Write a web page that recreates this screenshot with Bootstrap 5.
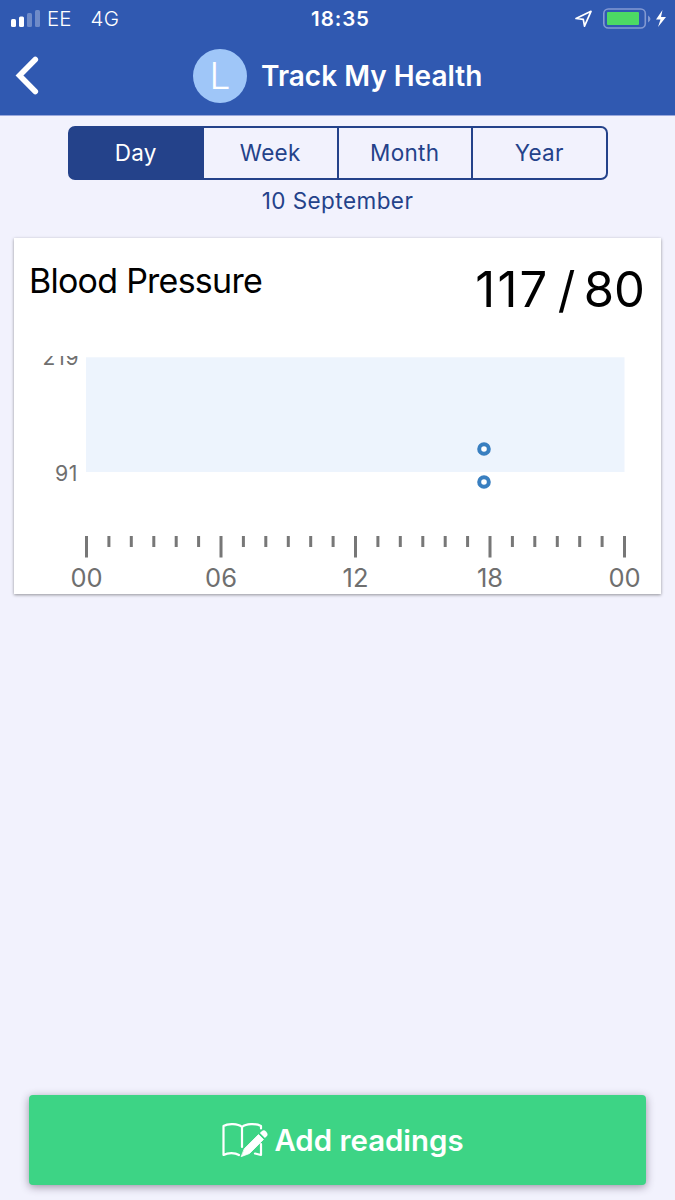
<!DOCTYPE html>
<html lang="en">
<head>
<meta charset="utf-8">
<meta name="viewport" content="width=device-width, initial-scale=1">
<title>Track My Health</title>
<link href="https://cdn.jsdelivr.net/npm/bootstrap@5.3.0/dist/css/bootstrap.min.css" rel="stylesheet">
<style>
  body { background: #f2f2fd; font-family: Inter, "Liberation Sans", sans-serif; }
  .app-header { background: #3059b1; height: 115px; border-bottom: 1px solid #9aa8dc; box-sizing: content-box; }
  .status-bar { height: 37px; font-size: 20.5px; line-height: 37px; padding: 0 8px 0 11px; }
  .status-time { font-weight: 600; font-size: 20.5px; letter-spacing: .9px; padding-left: 3px; }
  .carrier { margin-left: 6px; font-weight: 300; }
  .network { margin-left: 19px; font-weight: 300; letter-spacing: .4px; }
  .title-bar { height: 78px; }
  .avatar { width: 54px; height: 54px; background: #9fc6f8; font-size: 37px; font-weight: 300; }
  .app-title { font-size: 28px; font-weight: 600; line-height: 1; margin-left: 14px; }
  .range-tabs { width: 540px; height: 54px; margin-top: 10px; }
  .range-tabs .btn {
    --bs-btn-color: #24428a; --bs-btn-border-color: #24428a; --bs-btn-border-width: 2px;
    --bs-btn-active-color: #fff; --bs-btn-active-bg: #24428a; --bs-btn-active-border-color: #24428a;
    --bs-btn-border-radius: 7px; --bs-btn-font-size: 22.5px;
    flex: 1 1 0; padding: 0; line-height: 50px; letter-spacing: .3px;
  }
  .range-tabs.btn-group > .btn + .btn { margin-left: 0; border-left-width: 0; }
  .date-label { color: #24428a; font-size: 22.5px; line-height: 30px; margin-top: 6px; letter-spacing: .45px; }
  .reading-card { width: 647px; height: 356px; margin-top: 22px; box-shadow: 0 1px 3px rgba(0,0,0,.4); }
  .card-heading { height: 118px; padding: 0 16px 0 14px; }
  .metric-name { font-size: 34px; line-height: 40px; margin: 23px 0 0 1px; letter-spacing: -.75px; }
  .metric-value { font-size: 49px; line-height: 60px; margin-top: 22px; word-spacing: -5.5px; }
  .systolic { letter-spacing: 2.2px; }
  .chart text { fill: #6f6f6f; font-family: Inter, sans-serif; }
  .add-btn { width: 617px; height: 90px; margin-bottom: 15px; padding: 0 0 0 10px; background: #3dd485; color: #fff;
    border-radius: 4px; font-size: 29.4px; font-weight: 600; box-shadow: 0 2px 9px rgba(50,30,60,.45); }
  .add-label { margin-left: 6px; padding-top: 2px; }
</style>
</head>
<body class="vh-100 d-flex flex-column align-items-center overflow-hidden">
<header class="app-header w-100 text-white flex-shrink-0">
  <div class="status-bar d-flex justify-content-between">
    <div class="d-flex align-items-center col-4">
      <svg width="30" height="18" viewBox="0 0 30 18" fill="#fff"><rect x="0" y="9" width="5" height="8" rx="1.500"/><rect x="8" y="6.500" width="5" height="10.500" rx="1.500"/><g opacity=".3"><rect x="16" y="3" width="5" height="14" rx="1.500"/><rect x="24" y="0" width="5" height="17" rx="1.500"/></g></svg>
      <span class="carrier">EE</span><span class="network">4G</span>
    </div>
    <span class="status-time">18:35</span>
    <div class="d-flex align-items-center justify-content-end col-4">
      <svg width="92" height="22" viewBox="0 0 92 22">
        <path d="M1 10.500 16 3.300 9.500 18.200 8.300 11.400Z" fill="none" stroke="#fff" stroke-width="1.700" stroke-linejoin="round"/>
        <rect x="28.800" y="1" width="41.500" height="19" rx="4.500" fill="none" stroke="#8299d2" stroke-width="1.600"/>
        <rect x="32" y="4" width="32" height="13" rx="1" fill="#4cd964"/>
        <path d="M73 7.500q5 3.500 0 7z" fill="#8299d2"/>
        <path d="M87.500 2 81 11.500h4.500L83 19l8-10h-5z" fill="#fff"/>
      </svg>
    </div>
  </div>
  <div class="title-bar d-flex align-items-center">
    <svg width="193" height="54" viewBox="0 0 193 54" fill="none" stroke="#fff" stroke-width="5.600" stroke-linecap="round" stroke-linejoin="miter"><path d="M35.300 10.500 19.500 26.500 35.300 42.500"/></svg>
    <span class="avatar rounded-circle d-flex align-items-center justify-content-center">L</span>
    <span class="app-title">Track My Health</span>
  </div>
</header>

<div class="range-tabs btn-group flex-shrink-0" role="group">
  <button class="btn active">Day</button>
  <button class="btn">Week</button>
  <button class="btn">Month</button>
  <button class="btn">Year</button>
</div>
<div class="date-label">10 September</div>

<section class="reading-card bg-white flex-shrink-0">
  <div class="card-heading d-flex justify-content-between text-black">
    <span class="metric-name">Blood Pressure</span>
    <span class="metric-value"><span class="systolic">117</span> / 80</span>
  </div>
  <svg class="chart d-block" width="647" height="238" viewBox="14 356 647 238">
    <rect x="86" y="357.300" width="538.500" height="114.700" fill="#edf4fd"/>
    <text x="79.500" y="365" text-anchor="end" font-size="21" letter-spacing=".9">219</text>
    <text x="78" y="480.700" text-anchor="end" font-size="21.300" letter-spacing=".6">91</text>
    <g fill="#fff" stroke="#397fc0" stroke-width="4"><circle cx="484" cy="449" r="4.800"/><circle cx="484" cy="482" r="4.800"/></g>
    <g stroke="#777" stroke-width="3">
      <path d="M86.500 536v21.500M221 536v21.500M355.500 536v21.500M490 536v21.500M624.500 536v21.500"/>
      <path d="M108.900 536v11M131.300 536v11M153.800 536v11M176.200 536v11M198.600 536v11M243.400 536v11M265.800 536v11M288.300 536v11M310.700 536v11M333.100 536v11M377.900 536v11M400.300 536v11M422.800 536v11M445.200 536v11M467.600 536v11M512.400 536v11M534.800 536v11M557.300 536v11M579.700 536v11M602.100 536v11"/>
    </g>
    <g font-size="25.500" text-anchor="middle"><text x="86.500" y="587">00</text><text x="221" y="587">06</text><text x="355.500" y="587">12</text><text x="490" y="587">18</text><text x="624.500" y="587">00</text></g>
  </svg>
</section>

<button class="add-btn border-0 mt-auto flex-shrink-0 d-flex align-items-center justify-content-center">
  <svg width="47" height="36" viewBox="0 0 47 36" fill="none" stroke="#fff" stroke-width="2.200" stroke-linejoin="round" stroke-linecap="round">
    <path d="M21 5C17 1.500 7 1.300 2.500 4V33C7 30.500 14 30.500 18 33M21 5V25M21 5C25 1.500 35 1.300 40 4V6.500M40 22V33L34 31.500"/>
    <path d="M23.500 26.500 37.500 12.500 42.500 17.500 28.500 31.500 20.500 34.500Z" fill="#fff" stroke="#fff" stroke-width=".8"/>
    <path d="M38.900 11.100 41 9Q43 7.500 45 9.500Q47.500 12 46 14L43.900 16.100Z" fill="#fff" stroke="none"/>
  </svg>
  <span class="add-label">Add readings</span>
</button>
<script src="https://cdn.jsdelivr.net/npm/bootstrap@5.3.0/dist/js/bootstrap.bundle.min.js"></script>
</body>
</html>
